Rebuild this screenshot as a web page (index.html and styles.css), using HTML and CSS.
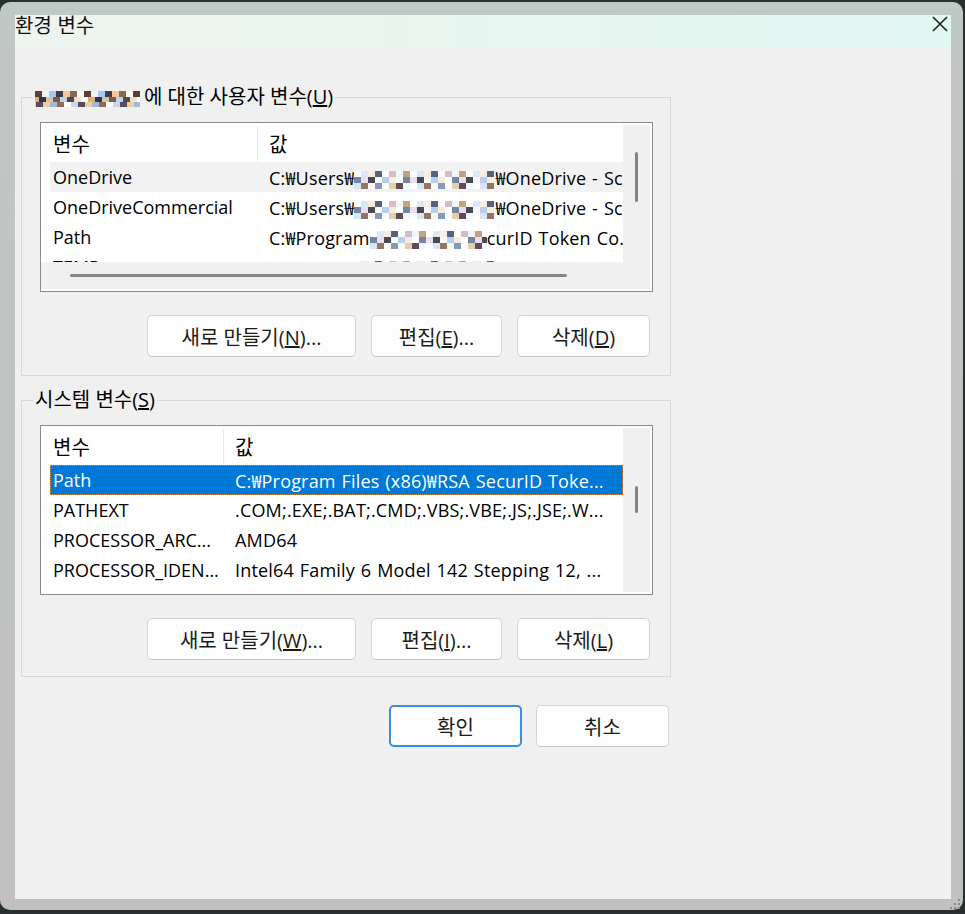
FILE: index.html
```html
<!DOCTYPE html>
<html lang="ko">
<head>
<meta charset="utf-8">
<title>환경 변수</title>
<link rel="stylesheet" href="styles.css">
</head>
<body>
<div class="window">
  <div class="titlebar">
    <span class="title">환경 변수</span>
    <svg class="close" viewBox="0 0 16 16" width="16" height="16"><path d="M1 1 L15 15 M15 1 L1 15" stroke="#1b1b1b" stroke-width="1.5" fill="none"/></svg>
  </div>
  <div class="client">
    <div class="panel">
      <fieldset class="group group-user">
        <legend><span class="mosaic mz-name"></span>에 대한 사용자 변수(<u>U</u>)</legend>
        <div class="listbox listbox-h">
          <div class="view view-user">
            <div class="row head"><div class="c1 hd">변수</div><div class="c2">값</div></div>
            <div class="row hover"><div class="c1">OneDrive</div><div class="c2">C:₩Users₩<span class="mosaic mz-val mz-a"></span>₩OneDrive - Sc</div></div>
            <div class="row"><div class="c1">OneDriveCommercial</div><div class="c2">C:₩Users₩<span class="mosaic mz-val mz-b"></span>₩OneDrive - Sc</div></div>
            <div class="row"><div class="c1">Path</div><div class="c2">C:₩Program<span class="mosaic mz-val mz-c"></span>curID Token Co.</div></div>
            <div class="row"><div class="c1">TEMP</div><div class="c2">C:₩Users₩<span class="mosaic mz-val mz-a"></span>₩AppData₩Local₩Temp</div></div>
          </div>
          <div class="vscroll"><div class="vthumb vthumb-user"></div></div>
          <div class="hscroll"><div class="hthumb"></div></div>
          <div class="corner"></div>
        </div>
        <div class="btnrow">
          <button class="btn w-new">새로 만들기(<u>N</u>)...</button>
          <button class="btn w-edit">편집(<u>E</u>)...</button>
          <button class="btn w-del">삭제(<u>D</u>)</button>
        </div>
      </fieldset>

      <fieldset class="group group-sys">
        <legend>시스템 변수(<u>S</u>)</legend>
        <div class="listbox">
          <div class="view view-sys">
            <div class="row head"><div class="c1 hd">변수</div><div class="c2">값</div></div>
            <div class="row selected"><div class="c1">Path</div><div class="c2">C:₩Program Files (x86)₩RSA SecurID Toke...</div></div>
            <div class="row"><div class="c1">PATHEXT</div><div class="c2">.COM;.EXE;.BAT;.CMD;.VBS;.VBE;.JS;.JSE;.W...</div></div>
            <div class="row"><div class="c1">PROCESSOR_ARC...</div><div class="c2">AMD64</div></div>
            <div class="row"><div class="c1">PROCESSOR_IDEN...</div><div class="c2">Intel64 Family 6 Model 142 Stepping 12, ...</div></div>
          </div>
          <div class="vscroll"><div class="vthumb vthumb-sys"></div></div>
        </div>
        <div class="btnrow">
          <button class="btn w-new">새로 만들기(<u>W</u>)...</button>
          <button class="btn w-edit">편집(<u>I</u>)...</button>
          <button class="btn w-del">삭제(<u>L</u>)</button>
        </div>
      </fieldset>

      <div class="dlgrow">
        <button class="btn w-del default">확인</button>
        <button class="btn w-del">취소</button>
      </div>
    </div>
  </div>
  <svg class="grip" viewBox="0 0 12 12" width="12" height="12"><g fill="#8a8a8a"><rect x="9" y="1" width="2" height="2"/><rect x="9" y="5" width="2" height="2"/><rect x="5" y="5" width="2" height="2"/><rect x="9" y="9" width="2" height="2"/><rect x="5" y="9" width="2" height="2"/><rect x="1" y="9" width="2" height="2"/></g></svg>
</div>
</body>
</html>
```

FILE: styles.css
```css
* { box-sizing: border-box; }
html, body { margin: 0; padding: 0; }
body {
  width: 965px;
  height: 914px;
  overflow: hidden;
  background: #27302e;
  font-family: "Open Sans", "Noto Sans CJK KR", sans-serif;
  font-size: 18px;
  color: #000;
}
.window {
  position: relative;
  margin-top: 2px;
  width: 963px;
  height: 908px;
  border-radius: 10px;
  background: linear-gradient(#bccac4 0, #c1c5c3 50px, #c0c0c0 100%);
  padding: 13px 12px 11px 15px;
  display: flex;
  flex-direction: column;
}
.titlebar {
  flex: none;
  height: 33px;
  display: flex;
  justify-content: space-between;
  align-items: flex-start;
  padding: 1px 3px 0 0;
  background: linear-gradient(90deg, #eef4ef 0%, #e6f6f0 60%, #e1f7f2 100%);
}
.title {
  font-family: "Noto Sans CJK KR", sans-serif;
  font-size: 20px;
  line-height: 18px;
  color: #111;
}
.close { display: block; }
.client {
  flex: 1;
  background: #f0f0f0;
  padding: 37px 0 0 6px;
}
.panel { width: 650px; }

.group {
  margin: 0;
  min-width: 0;
  border: 1px solid #d9d9d9;
  padding: 13px 17px 18px 18px;
}
.group-sys {
  margin-top: 12px;
  padding-bottom: 16px;
}
.group legend {
  margin-left: -7px;
  padding: 0 2px;
  line-height: 24px;
  font-size: 20px;
}

/* pixelated (blurred) areas */
.mosaic {
  display: inline-block;
  vertical-align: middle;
  background-repeat: repeat-x;
}
.mz-name {
  width: 105px;
  height: 16px;
  margin-right: 4px;
  background-size: 49px 6px, 56px 5px, 42px 5px;
  background-position: 0 0, -10px 6px, -20px 11px;
  background-image:
    linear-gradient(90deg, #5b4036 0 7px, #f4f4f4 7px 14px, #a9c7ee 14px 21px, #3c3f4a 21px 28px, #f2c79a 28px 35px, #8a6a55 35px 42px, #ffffff 42px 49px),
    linear-gradient(90deg, #ffffff 0 7px, #e4b06a 7px 14px, #2f3550 14px 21px, #d9c2a8 21px 28px, #7f5a48 28px 35px, #bcd4f4 35px 42px, #4b4b4b 42px 49px, #f0e0c8 49px 56px),
    linear-gradient(90deg, #8c6d5c 0 7px, #ffffff 7px 14px, #c7d6ea 14px 21px, #574d62 21px 28px, #e9cfa6 28px 35px, #a4b8d8 35px 42px);
}
.mz-val {
  height: 18px;
  background-size: 56px 6px, 49px 6px, 63px 6px;
  background-position: 0 0, -14px 6px, -7px 12px;
  background-image:
    linear-gradient(90deg, #ffffff 0 7px, #dbe8f7 7px 14px, #f6f0e2 14px 21px, #56627f 21px 28px, #ffffff 28px 35px, #d4bccb 35px 42px, #eef5fb 42px 49px, #c7a07d 49px 56px),
    linear-gradient(90deg, #f6ecdc 0 7px, #ffffff 7px 14px, #7584a1 14px 21px, #ebdeee 21px 28px, #4a4a55 28px 35px, #fafafa 35px 42px, #b8cfec 42px 49px),
    linear-gradient(90deg, #ffffff 0 7px, #d8e6f3 7px 14px, #947563 14px 21px, #fdf9f2 21px 28px, #8299c2 28px 35px, #ffffff 35px 42px, #e2cfae 42px 49px, #634a5b 49px 56px, #f1f7fb 56px 63px);
}
.mz-a { width: 141px; }
.mz-b { width: 141px; }
.mz-c { width: 117px; }

/* list views */
.listbox {
  height: 170px;
  border: 1px solid #8b8b8b;
  background: #fff;
  padding: 2px 2px 2px 0;
  display: grid;
  grid-template-columns: 1fr 27px;
  grid-template-rows: 1fr;
}
.listbox-h { grid-template-rows: 1fr 27px; }
.view {
  overflow: hidden;
  padding-left: 9px;
}
.row {
  display: grid;
  height: 30px;
  align-items: center;
  white-space: nowrap;
}
.view-user .row { grid-template-columns: 208px 1fr; }
.view-sys .row { grid-template-columns: 174px 1fr; }
.row.head { height: 37px; font-size: 20px; }
.row .c1 {
  padding-left: 3px;
  overflow: hidden;
}
.row .c2 {
  padding-left: 11px;
  overflow: hidden;
  letter-spacing: 0.18px;
  word-spacing: 1px;
}
.row.head .hd {
  height: 35px;
  display: flex;
  align-items: center;
  border-right: 1px solid #e5e5e5;
}
.row.hover { background: #f2f2f2; }
.row.selected {
  background: #0078d7;
  color: #fff;
  outline: 1px dotted #c98a4a;
  outline-offset: -1px;
}

.vscroll {
  background: #f0f0f0;
  display: flex;
  justify-content: center;
}
.vthumb {
  width: 3px;
  border-radius: 2px;
  background: #848484;
}
.vthumb-user { margin-top: 27px; height: 50px; }
.vthumb-sys { margin-top: 58px; height: 27px; }
.hscroll {
  background: #f0f0f0;
  display: flex;
  align-items: center;
  padding-left: 29px;
}
.hthumb {
  width: 497px;
  height: 3px;
  border-radius: 2px;
  background: #848484;
}
.corner { background: #f0f0f0; }

/* buttons */
.btnrow {
  margin-top: 23px;
  display: flex;
  justify-content: flex-end;
  column-gap: 15px;
  padding-right: 3px;
}
.btn {
  height: 42px;
  font-family: "Open Sans", "Noto Sans CJK KR", sans-serif;
  font-size: 20px;
  color: #1a1a1a;
  background: #fdfdfd;
  border: 1px solid #d3d3d3;
  border-bottom-color: #c2c2c2;
  border-radius: 5px;
  padding: 0;
}
.w-new { width: 209px; }
.w-edit { width: 131px; }
.w-del { width: 133px; }
.btn.default {
  border: 2px solid #3b8ede;
}
.dlgrow {
  margin-top: 28px;
  display: flex;
  justify-content: flex-end;
  column-gap: 14px;
  padding-right: 2px;
}
.grip {
  position: absolute;
  right: 2px;
  bottom: 0;
}
```
